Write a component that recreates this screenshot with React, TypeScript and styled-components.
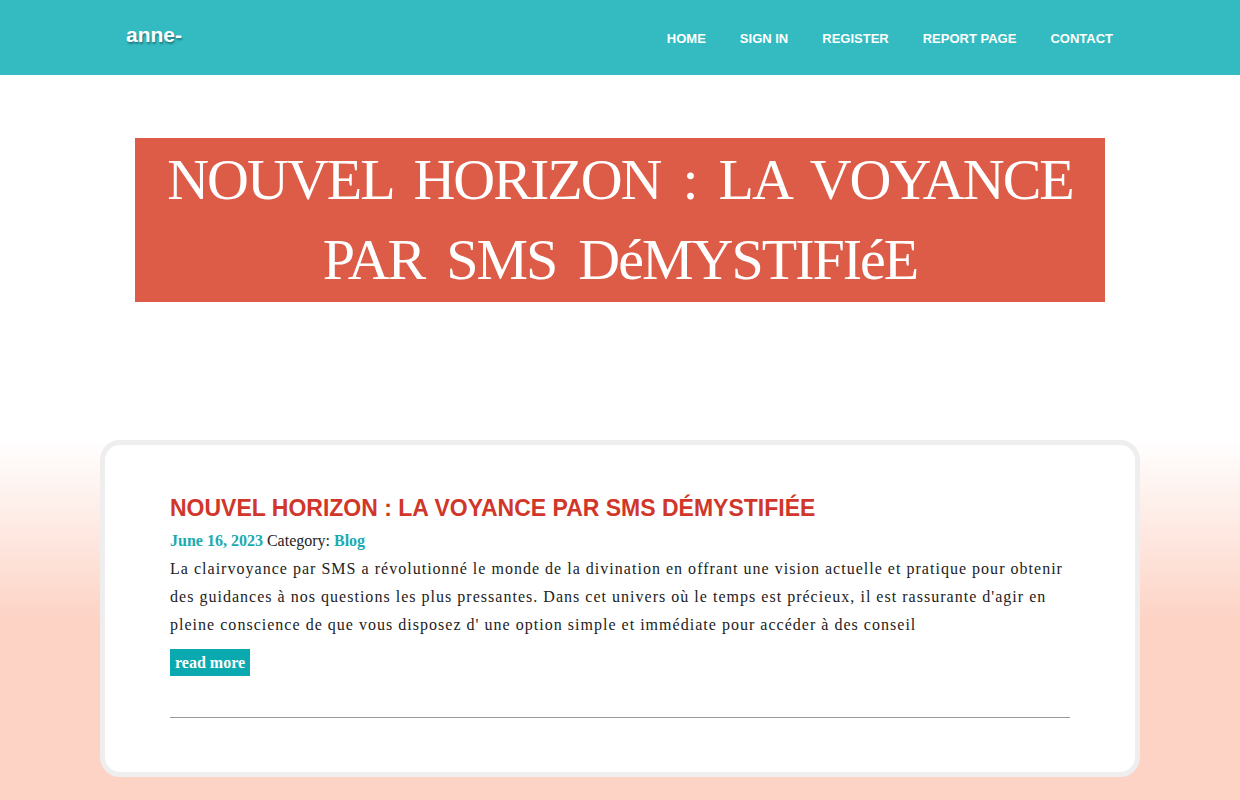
import styled, { createGlobalStyle } from "styled-components";

const GlobalStyle = createGlobalStyle`
  * {
    box-sizing: border-box;
  }
  body {
    margin: 0;
    font-family: "Liberation Serif", "Times New Roman", serif;
    background: #fdd3c5;
  }
`;

const navItems = ["HOME", "SIGN IN", "REGISTER", "REPORT PAGE", "CONTACT"];

function App() {
  return (
    <>
      <GlobalStyle />
      <Header>
        <HeaderInner>
          <Logo>anne-</Logo>
          <Nav>
            {navItems.map((item) => (
              <NavLink key={item} href="#">
                {item}
              </NavLink>
            ))}
          </Nav>
        </HeaderInner>
      </Header>

      <Hero>
        <HeroBox>
          <HeroTitle>NOUVEL HORIZON : LA VOYANCE PAR SMS DéMYSTIFIéE</HeroTitle>
        </HeroBox>
      </Hero>

      <PostSection>
        <Card>
          <PostTitle>NOUVEL HORIZON : LA VOYANCE PAR SMS DÉMYSTIFIÉE</PostTitle>
          <Meta>
            <Accent>June 16, 2023</Accent> Category: <Accent>Blog</Accent>
          </Meta>
          <Excerpt>
            La clairvoyance par SMS a révolutionné le monde de la divination en
            offrant une vision actuelle et pratique pour obtenir des guidances
            à nos questions les plus pressantes. Dans cet univers où le temps
            est précieux, il est rassurante d'agir en pleine conscience de que
            vous disposez d' une option simple et immédiate pour accéder à des
            conseil
          </Excerpt>
          <ReadMore href="#">read more</ReadMore>
          <Divider />
        </Card>
      </PostSection>
    </>
  );
}

const Header = styled.header`
  height: 75px;
  background: #33bbc1;
`;

const HeaderInner = styled.div`
  width: 1000px;
  margin: 0 auto;
  height: 100%;
  display: flex;
  align-items: center;
  justify-content: space-between;
  padding: 0 7px 0 6px;
`;

const Logo = styled.div`
  font-family: "Liberation Sans", Arial, sans-serif;
  font-weight: bold;
  font-size: 21px;
  color: #ffffff;
  text-shadow: 1px 2px 2px rgba(0, 0, 0, 0.35);
  margin-top: -5px;
`;

const Nav = styled.nav`
  display: flex;
  gap: 34px;
  margin-top: 2px;
`;

const NavLink = styled.a`
  font-family: "Liberation Sans", Arial, sans-serif;
  font-weight: bold;
  font-size: 13px;
  color: #ffffff;
  text-decoration: none;
`;

const Hero = styled.section`
  background: #ffffff;
  padding: 63px 0 138px;
  display: flex;
  justify-content: center;
`;

const HeroBox = styled.div`
  width: 970px;
  background: #dd5c48;
  padding: 2px 15px 2px;
`;

const HeroTitle = styled.h1`
  margin: 0;
  font-family: "Liberation Serif", "Times New Roman", serif;
  font-weight: normal;
  font-size: 58px;
  line-height: 80px;
  letter-spacing: -2px;
  word-spacing: 9.5px;
  color: #ffffff;
  text-align: center;
`;

const PostSection = styled.section`
  background: linear-gradient(#ffffff 0px, #fdd3c5 180px, #fdd3c5 100%);
  padding: 0 100px 40px;
`;

const Card = styled.article`
  background: #ffffff;
  border: 5px solid #eeeeee;
  border-radius: 20px;
  padding: 48px 65px 54px;
`;

const PostTitle = styled.h2`
  margin: 0;
  font-family: "Liberation Sans", Arial, sans-serif;
  font-weight: bold;
  font-size: 23px;
  line-height: 30px;
  color: #d0372a;
`;

const Meta = styled.div`
  margin-top: 7px;
  font-size: 16px;
  line-height: 22px;
  color: #222222;
`;

const Accent = styled.span`
  color: #1aabb1;
  font-weight: bold;
`;

const Excerpt = styled.p`
  margin: 3px 0 0;
  font-family: "Liberation Serif", "Times New Roman", serif;
  font-size: 16px;
  line-height: 28px;
  letter-spacing: 1.02px;
  color: #222222;
`;

const ReadMore = styled.a`
  display: inline-block;
  margin-top: 10px;
  padding: 0 5px;
  background: #0aa9b0;
  color: #ffffff;
  font-weight: bold;
  font-size: 16px;
  line-height: 27px;
  text-decoration: none;
`;

const Divider = styled.hr`
  margin: 41px 0 0;
  border: none;
  border-top: 1px solid #999999;
`;

export default App;
